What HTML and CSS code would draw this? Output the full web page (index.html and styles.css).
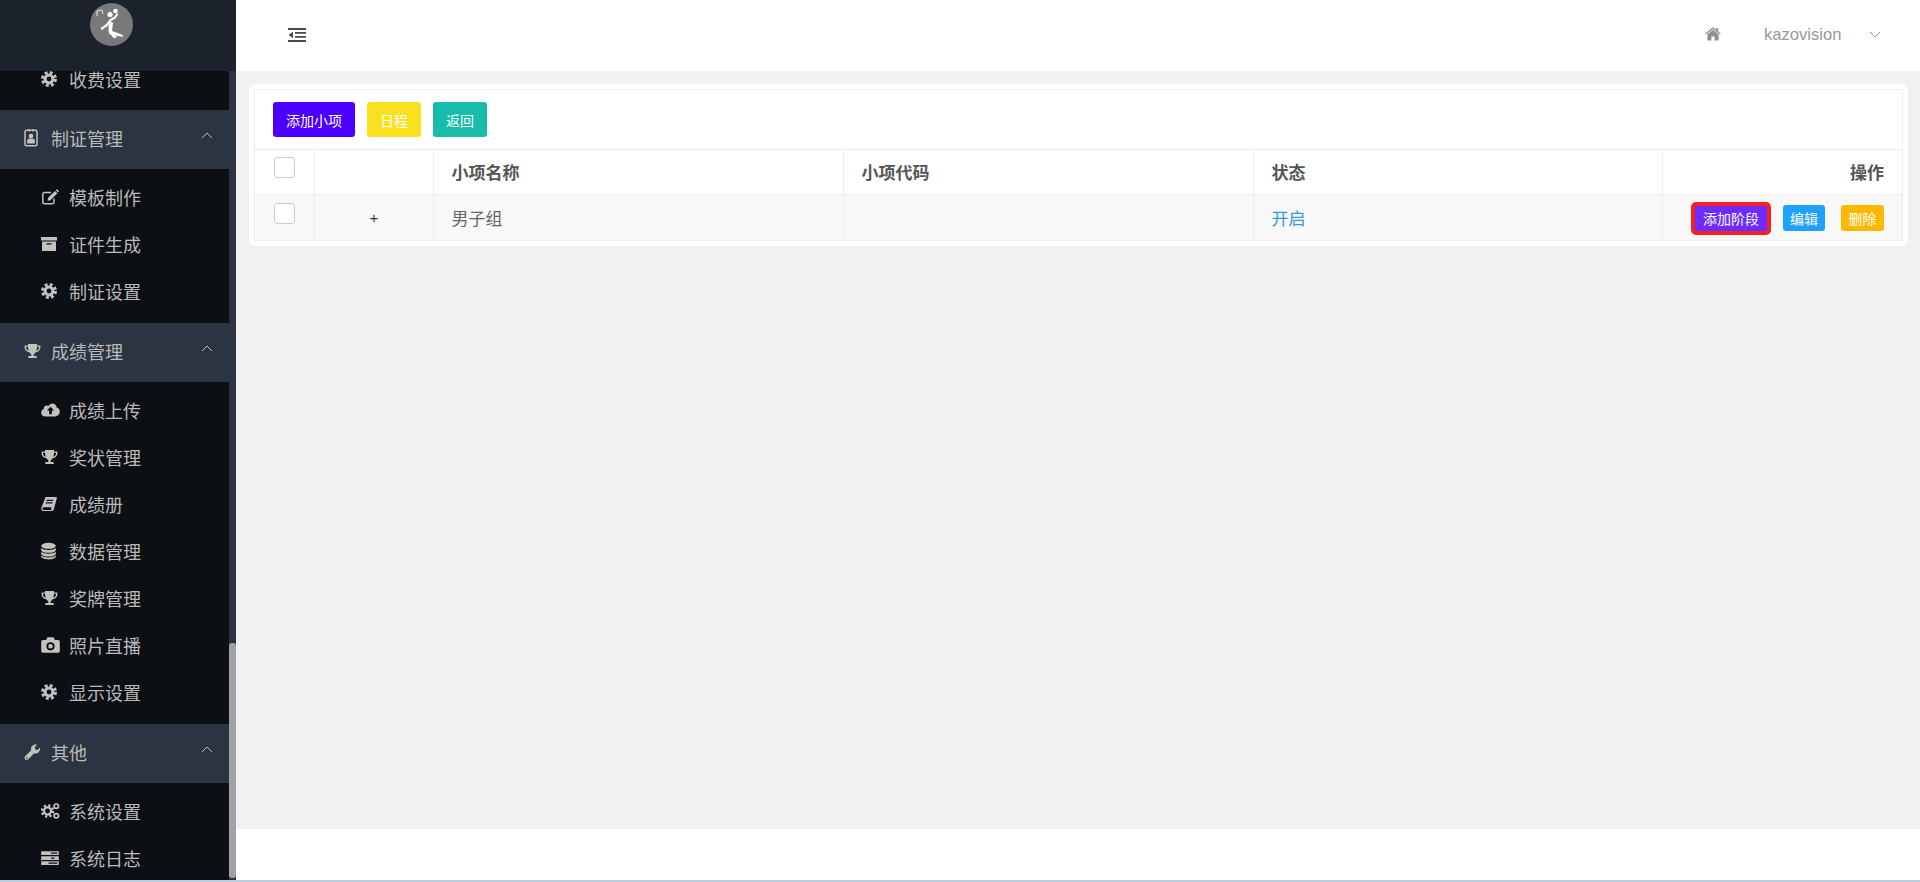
FILE: index.html
```html
<!DOCTYPE html>
<html lang="zh-CN">
<head>
<meta charset="utf-8">
<title>小项管理</title>
<link rel="stylesheet" href="styles.css">
</head>
<body>
<svg class="defs" width="0" height="0" aria-hidden="true">
  <symbol id="i-cog" viewBox="0 0 16 16">
    <circle cx="8" cy="8" r="6.5" fill="none" stroke="currentColor" stroke-width="3" stroke-dasharray="2.9 2.2"/>
    <circle cx="8" cy="8" r="3.900" fill="none" stroke="currentColor" stroke-width="3"/>
  </symbol>
  <symbol id="i-trophy" viewBox="0 0 17 16">
    <path fill="currentColor" fill-rule="evenodd" d="M4 1h9v1.4h3.4v2c0 2.4-2.200 4.400-4.700 4.800-.7 1-1.500 1.600-2 2V13h2.100c.6 0 1 .4 1 1v1H4.200v-1c0-.6.4-1 1-1h2.100v-1.800c-.5-.4-1.300-1-2-2C2.800 8.800.6 6.800.6 4.400v-2H4zM2 3.700v.7c0 1.500 1.200 2.800 2.800 3.300C4.300 6.600 4 5.300 4 3.700zm13 0h-2c0 1.600-.3 2.900-.8 4 1.600-.5 2.800-1.800 2.800-3.300z"/>
  </symbol>
  <symbol id="i-edit" viewBox="0 0 18 16">
    <path fill="none" stroke="currentColor" stroke-width="1.500" d="M13 9.500V13c0 1-.8 1.700-1.700 1.700H3.500c-1 0-1.700-.8-1.700-1.700V5.200c0-1 .8-1.700 1.700-1.700H10"/>
    <path fill="currentColor" d="M6.500 11.800l.6-3L14 1.900l2.400 2.400-6.900 6.900zM14.700 1.200l.6-.6c.3-.3.800-.3 1.100 0l1.300 1.300c.3.300.3.8 0 1.100l-.6.6z"/>
  </symbol>
  <symbol id="i-archive" viewBox="0 0 16 16">
    <path fill="currentColor" fill-rule="evenodd" d="M0 1h16v3.500H0zM1 5.500h14V15H1zM5.500 7.200v1.300h5V7.200z"/>
  </symbol>
  <symbol id="i-badge" viewBox="0 0 14 18">
    <path fill="none" stroke="currentColor" stroke-width="1.500" d="M2.500 1.200h9c.8 0 1.500.7 1.500 1.500v12.600c0 .8-.7 1.500-1.500 1.500h-9c-.8 0-1.500-.7-1.500-1.500V2.700C1 1.900 1.700 1.200 2.500 1.200z"/>
    <path fill="currentColor" d="M4.500 0h1.300v2.500H4.500zM8.200 0h1.300v2.500H8.200z"/>
    <circle cx="7" cy="7" r="2.300" fill="currentColor"/>
    <path fill="currentColor" d="M3.200 14.500v-2.700c0-1.300 1-2.300 2.300-2.300h3c1.300 0 2.300 1 2.300 2.300v2.700z"/>
  </symbol>
  <symbol id="i-cloud" viewBox="0 0 19 14">
    <path fill="currentColor" fill-rule="evenodd" d="M4.300 13.500C2 13.500.2 11.800.2 9.700c0-1.700 1.100-3.100 2.700-3.600 0-.2-.1-.4-.1-.6 0-1.700 1.400-3 3-3 .6 0 1.200.2 1.700.5C8.400 1.400 9.800.5 11.400.5c2.300 0 4.200 1.800 4.300 4.100 1.800.5 3.100 2.100 3.100 4 0 2.700-2.200 4.900-4.900 4.900zM9.500 3.700L5.900 7.400h2.200v3.900h2.800V7.400h2.200z"/>
  </symbol>
  <symbol id="i-book" viewBox="0 0 16 16">
    <path fill="currentColor" fill-rule="evenodd" d="M4.500 1H15c.6 0 1 .5.800 1l-2.700 10.500c-.3 1.300-.9 2.500-2.500 2.500H2.300C1 15 .2 14 .2 12.800c0-.3 0-.5.1-.8zM5.600 3.800l-.3 1.100h6.800l.3-1.100zM4.900 6.300l-.3 1.100h6.800l.3-1.100zM2.800 11.200c-.9 0-1.300.7-1.300 1.400 0 .7.400 1.300 1.200 1.300h7.800c-.4-.7-.4-1.800-.1-2.700z"/>
  </symbol>
  <symbol id="i-db" viewBox="0 0 15 17">
    <ellipse cx="7.500" cy="3.300" rx="7.300" ry="3" fill="currentColor"/>
    <path fill="currentColor" d="M.2 5.300c1 1.500 4 2.200 7.300 2.200s6.300-.7 7.300-2.200v2.100c0 1.600-3.300 2.900-7.300 2.900S.2 9 .2 7.400zM.2 9.100c1 1.500 4 2.200 7.300 2.200s6.300-.7 7.300-2.200v2.100c0 1.600-3.300 2.900-7.300 2.900S.2 12.800.2 11.200zM.2 12.800c1 1.500 4 2.200 7.300 2.200s6.300-.7 7.300-2.200v1.300c0 1.600-3.300 2.900-7.300 2.900S.2 15.700.2 14.100z"/>
  </symbol>
  <symbol id="i-camera" viewBox="0 0 19 16">
    <path fill="currentColor" fill-rule="evenodd" d="M2 3h3.200l.8-2c.1-.4.500-.7 1-.7h5c.5 0 .9.300 1 .7l.8 2H17c1 0 1.800.8 1.800 1.800V14c0 1-.8 1.800-1.800 1.800H2C1 15.800.2 15 .2 14V4.800C.2 3.800 1 3 2 3zm7.500 2.200a4.100 4.100 0 1 0 0 8.200 4.100 4.100 0 0 0 0-8.200zm0 1.800a2.300 2.300 0 1 1 0 4.600 2.300 2.300 0 0 1 0-4.600z"/>
  </symbol>
  <symbol id="i-wrench" viewBox="0 0 16 16">
    <path fill="currentColor" fill-rule="evenodd" d="M15.800 3.500c.2.500.2 1 .2 1.500 0 2.500-2 4.500-4.500 4.500-.5 0-.9-.1-1.300-.2l-6 6c-.8.900-2.200.9-3 .1-.9-.9-.9-2.300 0-3.100l6-6c-.1-.4-.2-.9-.2-1.300C7 2.500 9.200.4 11.700.4c.5 0 1 .1 1.500.2l-2.400 2.600.5 2.300 2.200.5zM2.800 13.300a.8.800 0 1 0 0 1.600.8.800 0 0 0 0-1.600z"/>
  </symbol>
  <symbol id="i-cogs" viewBox="0 0 19 16">
    <circle cx="6.500" cy="8" r="5.600" fill="none" stroke="currentColor" stroke-width="2.400" stroke-dasharray="2.200 2.200"/>
    <circle cx="6.500" cy="8" r="3.600" fill="none" stroke="currentColor" stroke-width="2.300"/>
    <circle cx="15.300" cy="3.200" r="2.200" fill="none" stroke="currentColor" stroke-width="1.700"/>
    <circle cx="15.300" cy="12.800" r="2.200" fill="none" stroke="currentColor" stroke-width="1.700"/>
  </symbol>
  <symbol id="i-server" viewBox="0 0 18 14">
    <path fill="currentColor" fill-rule="evenodd" d="M.2 .2h17.600v3.800H.2zM10 1.400v1.300h6.300V1.400zM.2 5.200h17.600V9H.2zM10 6.400v1.300h3.500V6.400zM.2 10.200h17.600V14H.2zM7.500 11.400v1.300h8.800v-1.300z"/>
  </symbol>
  <symbol id="i-home" viewBox="0 0 16 14">
    <path fill="currentColor" d="M8 2.700l5.600 4.600v5.400c0 .4-.3.7-.7.700H9.600V9.600H6.400v3.800H3.100c-.4 0-.7-.3-.7-.7V7.300z"/>
    <path fill="currentColor" d="M8 .4c.3 0 .6.100.8.300l2.400 2V1h2v3.400l2.500 2.100-.8 1L8 1.900.9 7.500l-.8-1L7.200.7C7.400.5 7.700.4 8 .4z"/>
  </symbol>
  <symbol id="i-indent" viewBox="0 0 18 14">
    <path fill="currentColor" d="M0 0h18v2H0zM7 4h11v1.700H7zM7 8h11v1.700H7zM0 12h18v2H0zM5 3.800v6.400L.6 7z"/>
  </symbol>
</svg>

<div class="app">
  <aside class="sidebar">
    <div class="logo-bar">
      <svg class="logo" viewBox="0 0 43 43" aria-hidden="true">
        <circle cx="21.500" cy="21.500" r="21.500" fill="#79797b"/>
        <path d="M7 13V8l5-1 1 4" fill="none" stroke="#fff" stroke-width=".8"/>
        <circle cx="20" cy="11.500" r="2.600" fill="#fff"/>
        <circle cx="25.500" cy="8" r="2.300" fill="#fff"/>
        <path d="M12 25.500l5-3.500 3.500-5 4.500-2.500 2-3" fill="none" stroke="#fff" stroke-width="2.200" stroke-linecap="round"/>
        <path d="M20 18l3 2-1 8 11 4-.6 2-13-3c-1-2-1.400-8.500.6-13z" fill="#fff"/>
        <path d="M21 27l6 7-3 1.500-5-6z" fill="#fff"/>
      </svg>
    </div>
    <div class="side-body">
      <nav class="menu">
        <ul class="sub sub-first">
          <li class="item item-clipped"><svg class="ic ic-16"><use href="#i-cog"/></svg><span>收费设置</span></li>
        </ul>
        <div class="head"><svg class="hic ic-badge"><use href="#i-badge"/></svg><span>制证管理</span><svg class="chev" viewBox="0 0 12 7"><path d="M1 6l5-5 5 5"/></svg></div>
        <ul class="sub">
          <li class="item"><svg class="ic ic-18"><use href="#i-edit"/></svg><span>模板制作</span></li>
          <li class="item"><svg class="ic ic-16"><use href="#i-archive"/></svg><span>证件生成</span></li>
          <li class="item"><svg class="ic ic-16"><use href="#i-cog"/></svg><span>制证设置</span></li>
        </ul>
        <div class="head"><svg class="hic ic-17"><use href="#i-trophy"/></svg><span>成绩管理</span><svg class="chev" viewBox="0 0 12 7"><path d="M1 6l5-5 5 5"/></svg></div>
        <ul class="sub">
          <li class="item"><svg class="ic ic-19"><use href="#i-cloud"/></svg><span>成绩上传</span></li>
          <li class="item"><svg class="ic ic-17"><use href="#i-trophy"/></svg><span>奖状管理</span></li>
          <li class="item"><svg class="ic ic-16"><use href="#i-book"/></svg><span>成绩册</span></li>
          <li class="item"><svg class="ic ic-db"><use href="#i-db"/></svg><span>数据管理</span></li>
          <li class="item"><svg class="ic ic-17"><use href="#i-trophy"/></svg><span>奖牌管理</span></li>
          <li class="item"><svg class="ic ic-19"><use href="#i-camera"/></svg><span>照片直播</span></li>
          <li class="item"><svg class="ic ic-16"><use href="#i-cog"/></svg><span>显示设置</span></li>
        </ul>
        <div class="head"><svg class="hic ic-16"><use href="#i-wrench"/></svg><span>其他</span><svg class="chev" viewBox="0 0 12 7"><path d="M1 6l5-5 5 5"/></svg></div>
        <ul class="sub">
          <li class="item"><svg class="ic ic-19"><use href="#i-cogs"/></svg><span>系统设置</span></li>
          <li class="item"><svg class="ic ic-18"><use href="#i-server"/></svg><span>系统日志</span></li>
        </ul>
      </nav>
      <div class="track"><div class="thumb"></div></div>
    </div>
  </aside>

  <div class="main">
    <header class="topbar">
      <svg class="toggle"><use href="#i-indent"/></svg>
      <div class="user">
        <svg class="home"><use href="#i-home"/></svg>
        <span class="uname">kazovision</span>
        <svg class="down" viewBox="0 0 12 7"><path d="M1 1l5 5 5-5"/></svg>
      </div>
    </header>
    <section class="content">
      <div class="card">
        <div class="panel">
          <div class="toolbar">
            <button class="btn btn-indigo">添加小项</button>
            <button class="btn btn-yellow">日程</button>
            <button class="btn btn-teal">返回</button>
          </div>
          <table class="grid">
            <colgroup>
              <col class="c-check"><col class="c-plus"><col class="c-name"><col class="c-code"><col class="c-state"><col class="c-ops">
            </colgroup>
            <thead>
              <tr>
                <th class="cell-check"><span class="checkbox"></span></th>
                <th></th>
                <th>小项名称</th>
                <th>小项代码</th>
                <th>状态</th>
                <th class="right">操作</th>
              </tr>
            </thead>
            <tbody>
              <tr>
                <td class="cell-check"><span class="checkbox"></span></td>
                <td class="center">+</td>
                <td>男子组</td>
                <td></td>
                <td class="state">开启</td>
                <td class="ops">
                  <div class="ops-row">
                    <button class="mini mini-stage">添加阶段</button>
                    <button class="mini mini-blue">编辑</button>
                    <button class="mini mini-amber">删除</button>
                  </div>
                </td>
              </tr>
            </tbody>
          </table>
        </div>
      </div>
    </section>
    <footer class="footer"></footer>
  </div>
</div>
<div class="edge"></div>
</body>
</html>
```
FILE: styles.css
```css
* { box-sizing: border-box; }
html, body { margin: 0; padding: 0; height: 882px; overflow: hidden; background: #fff; }
body { font-family: "Noto Sans CJK SC", "Liberation Sans", sans-serif; }
.defs { position: absolute; }
.app { display: flex; height: 880px; }
.edge { height: 2px; background: #b9cfdf; }

.sidebar { width: 236px; flex: none; display: flex; flex-direction: column; background: #0c0f14; }
.logo-bar { height: 71px; flex: none; background: #1c222b; padding: 3px 0 0 90px; }
.logo { display: block; width: 43px; height: 43px; }
.side-body { flex: 1; display: flex; min-height: 0; }
.menu { width: 229px; flex: none; overflow: hidden; background: #0c0f14; color: #bababa; font-size: 18px; }
.track { width: 7px; flex: none; background: #2b3440; position: relative; }
.thumb { position: absolute; left: 0; right: 0; top: 572px; height: 235px; background: #a2a2a6; border-radius: 3px; }

.sub { list-style: none; margin: 0; padding: 6px 0 7px; }
.sub-first { padding-top: 0; }
.item { height: 47px; display: flex; align-items: center; padding: 0 0 3px 41px; }
.item-clipped { margin-top: -14px; }
.sub-first { padding-bottom: 6px; }
.head { height: 59px; display: flex; align-items: center; padding: 0 0 3px 24px; background: #2b3440; position: relative; width: 236px; }
.ic { width: 29px; height: 16px; color: #c4c2be; flex: none; }
.hic { width: 28px; height: 17px; color: #c4c2be; flex: none; }
.ic-16 { width: 16px; height: 16px; margin-right: 12px; }
.ic-17 { width: 17px; height: 16px; margin-right: 11px; }
.ic-18 { width: 18px; height: 16px; margin-right: 10px; }
.ic-19 { width: 19px; height: 16px; margin-right: 9px; }
.ic-db { width: 15px; height: 18px; margin-right: 13px; }
.ic-badge { width: 14px; height: 18px; margin-right: 13px; }
.hic.ic-16 { margin-right: 11px; }
.hic.ic-17 { margin-right: 10px; }
.chev { position: absolute; left: 201px; top: 22px; width: 12px; height: 7px; fill: none; stroke: #bdbdbd; stroke-width: 1; }

.main { flex: 1; display: flex; flex-direction: column; min-width: 0; }
.topbar { height: 71px; flex: none; background: #fff; display: flex; align-items: center; justify-content: space-between; padding: 0 39px 2px 52px; }
.toggle { width: 18px; height: 14px; color: #4a4a4a; }
.user { display: flex; align-items: center; color: #999; font-family: "Liberation Sans", sans-serif; font-size: 16.600px; }
.home { width: 16px; height: 14px; color: #8f8f8f; margin-right: 43px; margin-top: -2px; }
.uname { width: 105px; }
.down { width: 12px; height: 7px; fill: none; stroke: #999; stroke-width: 1; }

.content { flex: 1; background: #f1f1f1; padding: 13px 12px 0 13px; min-height: 0; }
.card { background: #fff; border-radius: 6px; padding: 5px; }
.panel { border: 1px solid #eee; border-bottom: 0; }
.toolbar { height: 59px; display: flex; align-items: flex-start; gap: 12px; padding: 12px 0 0 18px; }
.btn { height: 35px; padding: 0 12px; border: 1px solid transparent; border-radius: 3px; color: #fff; font: 14px/1 "Noto Sans CJK SC", sans-serif; }
.btn-indigo { background: #4b00ff; }
.btn-yellow { background: #fae11f; }
.btn-teal { background: #18bcac; }

.grid { width: 100%; table-layout: fixed; border-collapse: collapse; color: #666; font-size: 17px; }
.c-check { width: 59px; }
.c-plus { width: 119px; }
.c-name { width: 410px; }
.c-code { width: 410px; }
.c-state { width: 409px; }
.grid th, .grid td { border: 1px solid #eee; padding: 0 18px; text-align: left; vertical-align: middle; }
.grid tr > :first-child { border-left: 0; }
.grid tr > :last-child { border-right: 0; }
.grid thead tr { height: 45px; }
.grid tbody tr { height: 46px; background: #f8f8f8; }
.grid th { color: #555; font-weight: 700; padding-bottom: 1px; }
.grid td { padding-bottom: 1px; }
.grid th.cell-check { padding: 7px 0 0 19px; vertical-align: top; }
.grid td.cell-check { padding: 8px 0 0 19px; vertical-align: top; }
.checkbox { display: block; width: 21px; height: 21px; background: #fff; border: 1px solid #ccc; border-radius: 3px; }
.grid .center { text-align: center; color: #333; font: 15px "Liberation Sans", sans-serif; padding-left: 19px; }
.grid .state { color: #3498db; }
.grid .right { text-align: right; }
.grid .ops { padding: 1px 18px 0 0; }
.ops-row { display: flex; justify-content: flex-end; align-items: center; gap: 12px; }
.mini { height: 26px; padding: 0 7px; border: 0; border-radius: 3px; color: #fff; font: 14px/26px "Noto Sans CJK SC", sans-serif; }
.mini-stage { background: #6d2cff; height: 33px; padding: 0 8px; border: 4px solid #fa2020; border-radius: 5px; line-height: 25px; }
.mini-blue { background: #20a0ff; }
.mini-amber { background: #ffb800; margin-left: 4px; padding: 0 7.500px; }

.footer { height: 51px; flex: none; background: #fff; }
```
